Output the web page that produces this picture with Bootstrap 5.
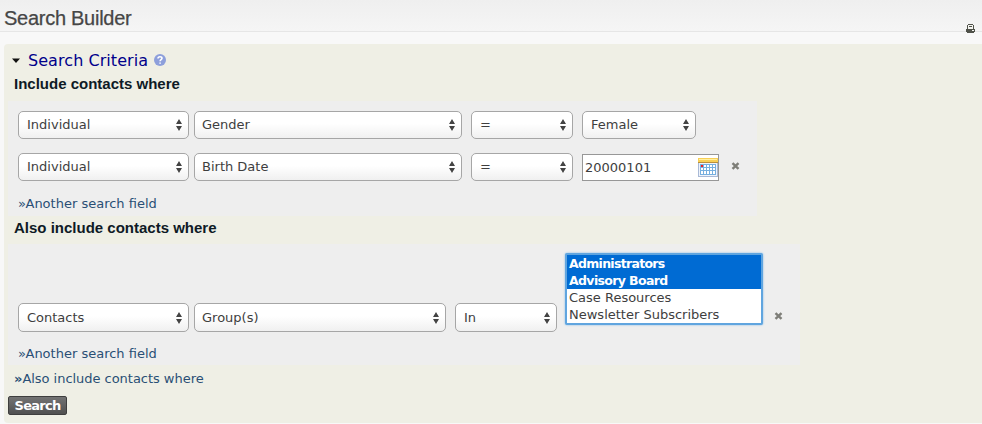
<!DOCTYPE html>
<html lang="en">
<head>
<meta charset="utf-8">
<title>Search Builder</title>
<link href="https://cdn.jsdelivr.net/npm/bootstrap@5.3.0/dist/css/bootstrap.min.css" rel="stylesheet">
<style>
body{font:13px/17px "DejaVu Sans",Verdana,sans-serif;color:#3e3e3e;background:#fff;height:424px;overflow:hidden}
.page{height:424px;background:#f8f8f8}
.page-head{height:32px;background:linear-gradient(#efefef,#f5f5f5);border-bottom:1px solid #e6e6e6;padding:7px 4px 0}
.page-head h1{font:20px/23px "Liberation Sans",Arial,sans-serif;color:#464646;-webkit-text-stroke:.25px #464646;letter-spacing:-.27px}
.print{margin:17px 3px 0 0}
.builder{margin:12px 0 0 4px;height:379px;background:#efefe5;border-radius:4px 0 0 4px}
.crit{height:30px;padding:7px 0 0 8px}
.crit a{font-size:16px;line-height:20px;color:#00008b;text-decoration:none;margin-left:8px;letter-spacing:.06px}
.tri{width:8px;height:5px;margin-top:7px}
.help{margin:3px 0 0 6px}
.where{font:bold 15px/18px "Liberation Sans",Arial,sans-serif;color:#0e1a25;margin:0 0 0 10px;padding-top:1px;height:27px}
.where.also{padding-top:3px;height:28px}
.block-a,.block-b{background:#eee;margin-left:4px;padding:10px 0 0 10px}
.block-a{width:749px;height:115px}
.block-b{width:792px;height:121px;padding-top:8px}
.crit-row{height:28px;margin-bottom:14px}
.pick.form-select{height:28px;padding:0 8px 0 7px;border:1px solid #a6a6a6;border-radius:5px;font-size:13px;line-height:24px;color:#3e3e3e;flex:none;background:url("data:image/svg+xml,%3Csvg xmlns='http://www.w3.org/2000/svg' width='6' height='12'%3E%3Cpath d='M3 0L6 5H0zM3 12L0 7H6z' fill='%23444'/%3E%3C/svg%3E") no-repeat right 6px center/6px 12px,linear-gradient(#fff 45%,#f0f0f0)}
.w-entity.form-select{width:171px;margin-right:5px;padding-left:8px}
.w-field.form-select{width:268px;margin-right:9px}
.w-group.form-select{width:252px;margin-right:9px}
.w-op.form-select{width:102px;margin-right:9px;padding-left:8px}
.w-value.form-select{width:114px;padding-left:8px}
.date-box{width:137px;height:27px;margin-top:1px;border:1px solid #979797;background:#fff}
.date-box input{border:0;padding:0 0 0 2px;width:115px;height:25px;font-size:13px;color:#3e3e3e;background:transparent}
.date-box svg{margin-top:3px;flex:none}
.remove{margin:9px 0 0 12px;width:9px;height:8px;flex:none}
.more{display:block;color:#2a4f75;text-decoration:none;line-height:17px;white-space:nowrap}
.last-row{height:80px}
.last-row .pick{height:29px}
.last-row .remove{align-self:flex-start;margin:60px 0 0 11px}
.block-b .more{margin-top:13px}
.again{margin:5px 0 0 10px;letter-spacing:-.03px}
.multi{width:198px;height:72px;margin:1px 0 0 -1px;align-self:flex-start;border:2px solid #60a5df;border-radius:2px;box-shadow:0 0 2px #72b4e8;background:#fff;line-height:17px;flex:none}
.multi div{padding-left:2px;height:17px;white-space:nowrap}
.multi .sel{background:#006bd3;color:#fff;font-size:12.5px;font-weight:bold;letter-spacing:-.7px}
.multi .sel + .sel{letter-spacing:-.63px}
.go{display:block;margin:9px 0 0 4px;width:59px;height:19px;padding:0;border:1px solid #3e3e3e;border-radius:2px;background:linear-gradient(#737373,#505050);color:#fff;font:bold 13px/16px "DejaVu Sans",Verdana,sans-serif;letter-spacing:-.75px}
svg{display:block}
</style>
<script src="https://cdn.jsdelivr.net/npm/bootstrap@5.3.0/dist/js/bootstrap.bundle.min.js"></script>
</head>
<body>
<svg class="d-none"><symbol id="x" viewBox="0 0 9 8"><path d="M1.5 1.2L7.5 6.8M7.5 1.2L1.5 6.8" stroke="#7e7e78" stroke-width="2.4"/></symbol></svg>
<main class="page">
<header class="page-head d-flex justify-content-between"><h1 class="m-0">Search Builder</h1>
<svg class="print" width="9" height="9" viewBox="0 0 9 9" shape-rendering="crispEdges"><path d="M2 0h5v1h1v4h1v3H8v1H1V8H0V5h1V1h1z" fill="#50524a"/><path d="M2 1h5v4H2z" fill="#f4f4f0"/><path d="M3 2h3v1H3z" fill="#50524a"/><path d="M6 6h2v1H6z" fill="#f4f4f0"/></svg></header>
<form class="builder">
<div class="crit d-flex align-items-start"><svg class="tri" viewBox="0 0 8 5"><path d="M0 .5h8L4 5z" fill="#111"/></svg><a href="#">Search Criteria</a>
<svg class="help" width="12" height="12" viewBox="0 0 12 12"><circle cx="6" cy="6" r="6" fill="#8d9fdb"/><path d="M4 4.5C4 2 8 2.2 8 4.3 8 5.8 6.1 5.6 6.1 7.2M6.1 8.4v1.4" fill="none" stroke="#fff" stroke-width="1.6"/></svg></div>
<h2 class="where">Include contacts where</h2>
<section class="block-a">
<div class="crit-row d-flex"><select class="form-select pick w-entity"><option>Individual</option></select><select class="form-select pick w-field"><option>Gender</option></select><select class="form-select pick w-op"><option>=</option></select><select class="form-select pick w-value"><option>Female</option></select></div>
<div class="crit-row d-flex"><select class="form-select pick w-entity"><option>Individual</option></select><select class="form-select pick w-field"><option>Birth Date</option></select><select class="form-select pick w-op"><option>=</option></select>
<div class="date-box d-flex"><input value="20000101"><svg width="20" height="20" viewBox="0 0 20 20" shape-rendering="crispEdges"><path d="M0 3h20v16H0z" fill="#a9b9d6"/><path d="M1 4h18v14H1z" fill="#eef3fa"/><path d="M0 0h20v4H0z" fill="#f8cf55"/><path d="M1 1h18v1H1z" fill="#fff0a0"/><path d="M0 4h20v1H0z" fill="#b98f3d"/><path d="M2 6h16v11H2z" fill="#76afdf"/><path d="M3 7h2v2H3zm3 0h2v2H6zm3 0h2v2H9zm3 0h2v2h-2zm3 0h2v2h-2zM3 10h2v2H3zm3 0h2v2H6zm3 0h2v2H9zm3 0h2v2h-2zm3 0h2v2h-2zM3 13h2v3H3zm3 0h2v3H6zm3 0h2v3H9zm3 0h2v3h-2zm3 0h2v3h-2z" fill="#fff"/><path d="M3 7h2v2H3z" fill="#f02020"/></svg></div><svg class="remove"><use href="#x"/></svg></div>
<a class="more" href="#">»Another search field</a>
</section>
<h2 class="where also">Also include contacts where</h2>
<section class="block-b">
<div class="d-flex align-items-end last-row"><select class="form-select pick w-entity"><option>Contacts</option></select><select class="form-select pick w-group"><option>Group(s)</option></select><select class="form-select pick w-op"><option>In</option></select>
<div class="multi" role="listbox"><div class="sel">Administrators</div><div class="sel">Advisory Board</div><div>Case Resources</div><div>Newsletter Subscribers</div></div><svg class="remove"><use href="#x"/></svg></div>
<a class="more" href="#">»Another search field</a>
</section>
<a class="more again" href="#"><b>»</b>Also include contacts where</a>
<button type="button" class="go">Search</button>
</form>
</main>
</body>
</html>
